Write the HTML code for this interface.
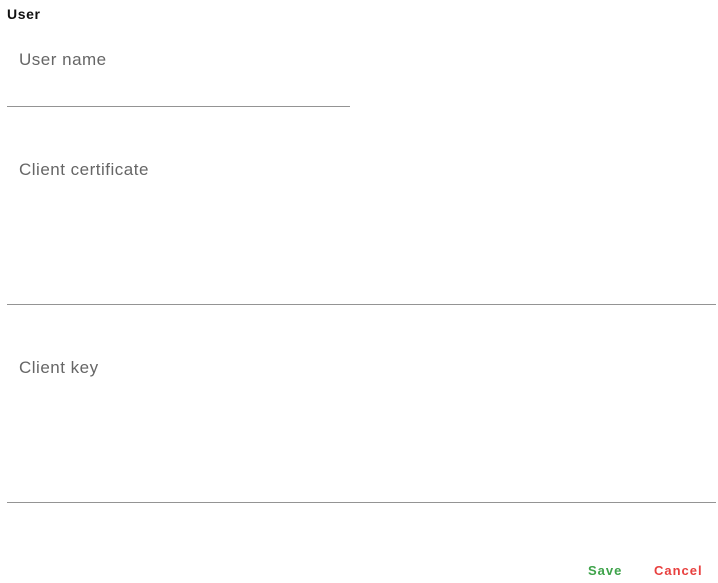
<!DOCTYPE html><html><head><style>
body{margin:0;width:718px;height:583px;background:#fff;font-family:"Liberation Sans",sans-serif;position:relative;overflow:hidden}
.a{position:absolute}
.l{color:#666;font-size:17px;letter-spacing:0.5px}
.hr{position:absolute;height:1px;background:#949494}
</style></head><body>
<div class="a" style="left:7px;top:6px;font-size:14px;font-weight:bold;color:#111;letter-spacing:0.6px">User</div>
<div class="a l" style="left:19px;top:50px">User name</div>
<div class="hr" style="left:7px;top:106px;width:343px"></div>
<div class="a l" style="left:19px;top:160px">Client certificate</div>
<div class="hr" style="left:7px;top:304px;width:709px"></div>
<div class="a l" style="left:19px;top:358px">Client key</div>
<div class="hr" style="left:7px;top:502px;width:709px"></div>
<div class="a" style="left:588px;top:563px;font-size:13px;font-weight:bold;letter-spacing:1px;color:#3ea34a">Save</div>
<div class="a" style="left:654px;top:563px;font-size:13px;font-weight:bold;letter-spacing:1px;color:#e8403f">Cancel</div>
</body></html>
